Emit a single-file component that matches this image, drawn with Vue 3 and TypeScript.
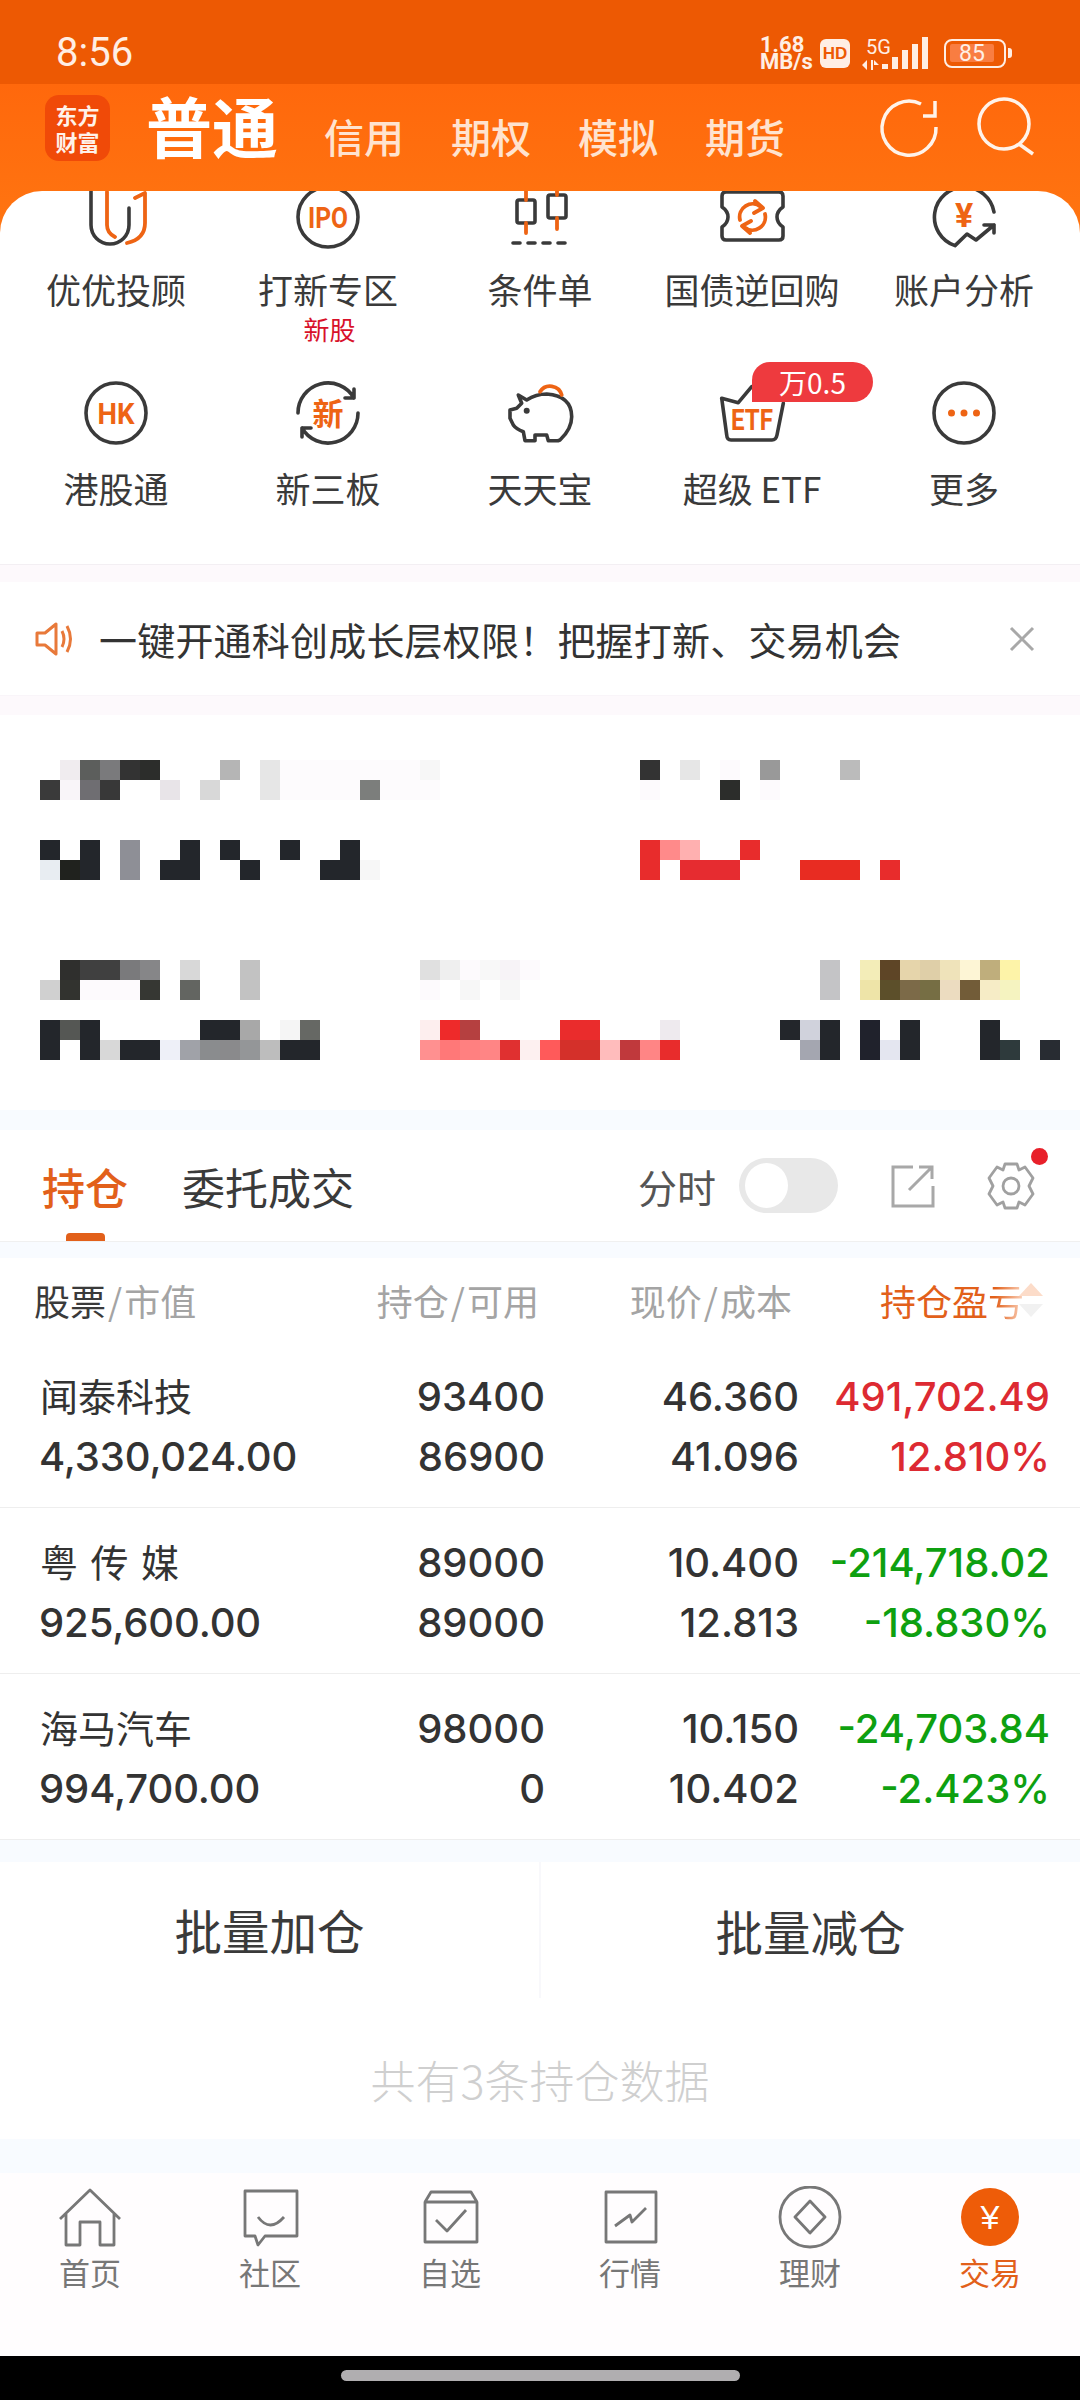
<script setup lang="ts">
interface GridIcon {
  label: string
  sub?: string
  badge?: string
  dark: string
  accent: string
  fill?: string
  glyph?: { text: string; x: number; y: number; size: number; length?: number }
}

const grid: GridIcon[] = [
  { label: '优优投顾', dark: 'M15 4V48a19 19 0 0 0 38 0V31', accent: 'M31 15V48Q31 56 39 60M59 21L69 16V46Q69 62 51 66' },
  { label: '打新专区', sub: '新股', dark: 'M70 40A30 30 0 1 1 10 40A30 30 0 1 1 70 40', accent: '', glyph: { text: 'IPO', x: 40, y: 51, size: 30, length: 40 } },
  { label: '条件单', dark: 'M19 23H33a2 2 0 0 1 2 2V44a2 2 0 0 1-2 2H19a2 2 0 0 1-2-2V25a2 2 0 0 1 2-2ZM50 18H64a2 2 0 0 1 2 2V39a2 2 0 0 1-2 2H50a2 2 0 0 1-2-2V20a2 2 0 0 1 2-2ZM13 66H20M28 66H35M43 66H50M58 66H65', accent: 'M26 6V23M26 46V56M57 6V18M57 41V52' },
  { label: '国债逆回购', dark: 'M14 15H67Q71 15 71 19V30Q65 34 65 40Q65 46 71 50V59Q71 63 67 63H14Q10 63 10 59V50Q16 46 16 40Q16 34 10 30V19Q10 15 14 15Z', accent: 'M28 43A13 13 0 0 1 49 30M43 24L51 31L42 36M53 37A13 13 0 0 1 32 50M38 56L30 49L39 44' },
  { label: '账户分析', dark: 'M70 35A30 30 0 1 0 31 68.6L43 57L52 63L70 48M60 48H70V56', accent: '', glyph: { text: '¥', x: 40, y: 50, size: 34 } },
  { label: '港股通', dark: 'M70 40A30 30 0 1 1 10 40A30 30 0 1 1 70 40', accent: '', glyph: { text: 'HK', x: 40, y: 51, size: 30, length: 37 } },
  { label: '新三板', dark: 'M10 40A30 30 0 0 1 66 25M66 16V25H57M70 40A30 30 0 0 1 14 55M14 64V55H23', accent: '', glyph: { text: '新', x: 40, y: 52, size: 31 } },
  { label: '天天宝', dark: 'M18.3 22L26.7 27Q36 21 46.7 21Q71.7 23 71.7 43.7Q71.7 56 60 67L58 67.7H48.3L46.7 62H35V67.7H25L23.3 58.7Q16 56 13.3 52L10 45.3V37L16.7 35.3L21.7 30.3Z', accent: 'M40 18.7A12 12 0 0 1 61.7 22', fill: 'M29.7 37.7a3 3 0 1 1-6 0a3 3 0 1 1 6 0Z' },
  { label: '超级 ETF', badge: '万0.5', dark: 'M9.7 25.3L26.3 29.7L39.7 13.7M9.7 25.3L14.7 62Q15 67 19 67H60Q64 67 65 62L71.3 30.3', accent: '', glyph: { text: 'ETF', x: 40, y: 57, size: 30, length: 42 } },
  { label: '更多', dark: 'M70 40A30 30 0 1 1 10 40A30 30 0 1 1 70 40', accent: '', fill: 'M31 40a3.5 3.5 0 1 1-7 0a3.5 3.5 0 1 1 7 0ZM43.500 40a3.5 3.5 0 1 1-7 0a3.5 3.5 0 1 1 7 0ZM56 40a3.5 3.5 0 1 1-7 0a3.5 3.5 0 1 1 7 0Z' },
]

// censored area of the original, 20px cells, '-' is an empty cell
const w = '-'
const mosaicTop = [
  {
    rows: [
      `${w} #f0ecef #5c5e5c #7a7a7c #333333 #2c2d2b ${w} ${w} ${w} #b5b5b5 ${w} #e6e6e6 #fdfbfd #fdfbfd #fdfbfd #fdfbfd #fdfbfd #fdfbfd #fdfbfd #f7f7f7`,
      `#3a3a3a #f9f5f9 #6f6e72 #383838 ${w} ${w} #e8e4e8 ${w} #d8d8d8 ${w} ${w} #e6e6e6 #fdfbfd #fdfbfd #fdfbfd #fdfbfd #7c7e7c #fdfbfd #fdfbfd #fdfbfd`,
    ],
    rows2: [
      `#23262b ${w} #23262b ${w} #8e8f96 ${w} ${w} #23262b ${w} #23262b ${w} ${w} #23262b ${w} ${w} #23262b ${w}`,
      `#e8edf2 #20221e #23262b ${w} #8e8f96 ${w} #23262b #23262b ${w} ${w} #23262b ${w} ${w} ${w} #23262b #23262b #f7f7f7`,
    ],
  },
  {
    rows: [
      `#333333 ${w} #e6e6e6 ${w} #fdfafd ${w} #999999 ${w} ${w} ${w} #bbbbbb`,
      `#fdfafd ${w} ${w} ${w} #2c2d2b ${w} #fdfafd`,
    ],
    rows2: [
      `#e82c2c #ff8a8a #ffb0b0 ${w} ${w} #e82c2c`,
      `#e82c2c ${w} #e62c30 #e62c30 #e62c30 ${w} ${w} ${w} #e82c22 #e82c22 #e82c22 ${w} #e82c2c`,
    ],
  },
]
const mosaicBottom = [
  {
    rows: [
      `${w} #2f2f2d #404040 #404040 #7a7a7c #868688 ${w} #d8d8d8 ${w} ${w} #c2c2c2`,
      `#d0d0d0 #32332f #fdfafd #fdfafd #fdfafd #363733 ${w} #636561 ${w} ${w} #c2c2c2`,
    ],
    rows2: [
      `#23262b #555754 #23262b ${w} ${w} ${w} ${w} ${w} #23262b #23262b #a8a8a8 ${w} #f5f5f5 #666864`,
      `#23262b ${w} #23262b #d8d8d8 #23262b #23262b #eef0f8 #a0a2a8 #8a8c8e #8a8a8c #949698 #bdbdbd #23262b #23262b`,
    ],
  },
  {
    rows: [
      `#e0e0e0 #efefef #fdfafd #f8f8f8 #f7f3f7 #fdfafd`,
      `#fdfafd ${w} #f7f7f7 ${w} #f7f7f7`,
    ],
    rows2: [
      `#fdeeee #ee2a2a #b54040 ${w} ${w} ${w} ${w} #ea2c2c #ea2c2c ${w} ${w} ${w} #eeeaee`,
      `#ff9090 #ff7878 #ff8080 #ff8585 #e03030 #fdf0f0 #ff5a5a #d4302a #d4302a #ffbcbc #c0393c #ff8585 #e82c2c`,
    ],
  },
  {
    rows: [
      `${w} ${w} #c4c4c6 ${w} #f3edb8 #5e4526 #e6d5ab #dfcfa8 #efe3ba #fdf5d5 #bfae7c #fdf3a8`,
      `${w} ${w} #c4c4c6 ${w} #eee4a8 #5c4f2a #7c6a48 #766e44 #ecdcc0 #725c38 #f6ecc6 #f5f3c0`,
    ],
    rows2: [
      `#23262b #d0d2dc #23262b ${w} #20222c ${w} #23262b ${w} ${w} ${w} #23262b`,
      `${w} #a4a6b0 #23262b ${w} #20222c #e4e6f0 #23262b ${w} ${w} ${w} #23262b #2e3a3c ${w} #282c32`,
    ],
  },
]

const cells = (row: string) => row.split(' ').map((c) => (c === '-' ? 'transparent' : c))

const holdings = [
  { name: '闻泰科技', value: '4,330,024.00', qty: '93400', free: '86900', price: '46.360', cost: '41.096', pnl: '491,702.49', pct: '12.810%', up: true },
  { name: '粤 传 媒', value: '925,600.00', qty: '89000', free: '89000', price: '10.400', cost: '12.813', pnl: '-214,718.02', pct: '-18.830%', up: false },
  { name: '海马汽车', value: '994,700.00', qty: '98000', free: '0', price: '10.150', cost: '10.402', pnl: '-24,703.84', pct: '-2.423%', up: false },
]

const tabs = [
  { label: '首页', d: 'M2 33L32 4L62 33M8 27V59H22V36H42V59H56V27' },
  { label: '社区', d: 'M7 5H59V50H27L20 59L17 50H7ZM20 31Q32 47 46 31' },
  { label: '自选', d: 'M7 16H59V56H7ZM7 16L13 6H53L59 16M18 34L29 45L48 24' },
  { label: '行情', d: 'M8 6H58V56H8ZM17 40L32 29L34 36L48 22' },
  { label: '理财', d: 'M62 31A30 30 0 1 1 2 31A30 30 0 1 1 62 31ZM32 15L47 31L32 47L17 31Z' },
]
</script>

<template>
  <div class="app">
    <div class="status">
      <span class="time">8:56</span>
      <div class="status-right">
        <div class="speed"><span>1.68</span><span>MB/s</span></div>
        <span class="hd">HD</span>
        <div class="net">
          <span class="five-g">5G</span>
          <svg class="arrows" width="20" height="10" viewBox="0 0 20 10"><path d="M5 0V10L0 5ZM9 0H11V10H9ZM12 0L17 5H12Z" fill="#ffeee4" /></svg>
        </div>
        <svg class="bars" width="46" height="32" viewBox="0 0 46 32"><path d="M0 27H6V32H0ZM10 20H16V32H10ZM20 13H26V32H20ZM30 7H36V32H30ZM40 0H46V32H40Z" fill="#ffeee4" /></svg>
        <div class="battery">
          <div class="battery-body"><span class="battery-level">85</span></div>
          <span class="battery-nub"></span>
        </div>
      </div>
    </div>

    <div class="nav">
      <div class="logo"><span>东方</span><span>财富</span></div>
      <span class="nav-main">普通</span>
      <div class="nav-links">
        <span>信用</span>
        <span>期权</span>
        <span>模拟</span>
        <span>期货</span>
      </div>
      <svg class="refresh" width="64" height="64" viewBox="0 0 64 64" fill="none" stroke="#fff3ea" stroke-width="3.5"><path d="M44 9A27 27 0 1 0 59 32M46 21H58V6" /></svg>
      <svg class="search" width="60" height="60" viewBox="0 0 60 60" fill="none" stroke="#fff3ea" stroke-width="3.5"><circle cx="28" cy="27" r="25" /><path d="M43 47L57 57" /></svg>
    </div>

    <div class="sheet">
      <div class="menu">
        <div v-for="item in grid" :key="item.label" class="menu-item">
          <svg width="80" height="80" viewBox="0 0 80 80" fill="none">
            <path :d="item.dark" stroke="#3a3a3a" stroke-width="3.6" stroke-linecap="round" stroke-linejoin="round" />
            <path v-if="item.accent" :d="item.accent" stroke="#ee6414" stroke-width="3.8" stroke-linecap="round" stroke-linejoin="round" />
            <path v-if="item.fill" :d="item.fill" :fill="item.label === '更多' ? '#ee6414' : '#3a3a3a'" />
            <text
              v-if="item.glyph"
              :x="item.glyph.x"
              :y="item.glyph.y"
              :font-size="item.glyph.size"
              :textLength="item.glyph.length"
              lengthAdjust="spacingAndGlyphs"
              text-anchor="middle"
              class="glyph"
            >{{ item.glyph.text }}</text>
          </svg>
          <span class="menu-label">{{ item.label }}</span>
          <span v-if="item.sub" class="menu-sub">{{ item.sub }}</span>
          <span v-if="item.badge" class="menu-badge">{{ item.badge }}</span>
        </div>
      </div>

      <div class="band"></div>

      <div class="notice">
        <svg width="40" height="36" viewBox="0 0 40 36" fill="none" stroke="#e8793a" stroke-width="3" stroke-linejoin="round">
          <path d="M2 12H10L21 3V33L10 24H2ZM27 10Q31 18 27 26M32 5Q39 18 32 31" />
        </svg>
        <span class="notice-text">一键开通科创成长层权限！把握打新、交易机会</span>
        <svg class="notice-close" width="26" height="26" viewBox="0 0 26 26" stroke="#a8a8a8" stroke-width="3"><path d="M2 2L24 24M24 2L2 24" /></svg>
      </div>

      <div class="band second"></div>

      <div class="assets">
        <div class="asset-row top">
          <div v-for="(block, i) in mosaicTop" :key="i" class="asset">
            <div class="mosaic">
              <div v-for="(row, r) in block.rows" :key="r" class="mosaic-row">
                <i v-for="(c, k) in cells(row)" :key="k" :style="{ background: c }"></i>
              </div>
            </div>
            <div class="mosaic">
              <div v-for="(row, r) in block.rows2" :key="r" class="mosaic-row">
                <i v-for="(c, k) in cells(row)" :key="k" :style="{ background: c }"></i>
              </div>
            </div>
          </div>
        </div>
        <div class="asset-row bottom">
          <div v-for="(block, i) in mosaicBottom" :key="i" class="asset">
            <div class="mosaic">
              <div v-for="(row, r) in block.rows" :key="r" class="mosaic-row">
                <i v-for="(c, k) in cells(row)" :key="k" :style="{ background: c }"></i>
              </div>
            </div>
            <div class="mosaic">
              <div v-for="(row, r) in block.rows2" :key="r" class="mosaic-row">
                <i v-for="(c, k) in cells(row)" :key="k" :style="{ background: c }"></i>
              </div>
            </div>
          </div>
        </div>
      </div>

      <div class="band tint"></div>

      <div class="tabs">
        <span class="tab active">持仓</span>
        <span class="tab">委托成交</span>
        <div class="tools">
          <span class="tool-label">分时</span>
          <span class="toggle"><span class="knob"></span></span>
          <svg class="share" width="44" height="44" viewBox="0 0 44 44" fill="none" stroke="#a8a8a8" stroke-width="3"><path d="M22 3H2V42H42V22M18 26L41 3M28 3H41V15" /></svg>
          <div class="gear">
            <svg width="50" height="50" viewBox="0 0 50 50" fill="none" stroke="#a0a0a0" stroke-width="2.8" stroke-linejoin="round">
              <path d="M19 3H31L33 9L39 6L47 17L43 25L47 33L39 44L33 41L31 47H19L17 41L11 44L3 33L7 25L3 17L11 6L17 9Z" />
              <circle cx="25" cy="25" r="8" />
            </svg>
            <span class="gear-dot"></span>
          </div>
        </div>
      </div>

      <div class="band tint thin"></div>

      <div class="table-head">
        <span><b>股票</b><i>/</i>市值</span>
        <span class="col">持仓<i>/</i>可用</span>
        <span class="col">现价<i>/</i>成本</span>
        <span class="col-sort">持仓盈<span class="fade">亏</span>
          <svg class="sort" width="28" height="34" viewBox="0 0 28 34"><path d="M14 0L26 13H2Z" fill="#fcdcc9" /><path d="M14 34L2 21H26Z" fill="#f1f1f1" /></svg>
        </span>
      </div>

      <div v-for="row in holdings" :key="row.name" class="row">
        <span class="name">{{ row.name }}</span>
        <span class="num">{{ row.qty }}</span>
        <span class="num">{{ row.price }}</span>
        <span class="num" :class="row.up ? 'up' : 'down'">{{ row.pnl }}</span>
        <span class="value">{{ row.value }}</span>
        <span class="num">{{ row.free }}</span>
        <span class="num">{{ row.cost }}</span>
        <span class="num" :class="row.up ? 'up' : 'down'">{{ row.pct }}</span>
      </div>

      <div class="band tint gap"></div>

      <div class="batch">
        <span>批量加仓</span>
        <span>批量减仓</span>
      </div>
      <div class="total">共有3条持仓数据</div>
      <div class="band tint foot"></div>
    </div>

    <div class="tabbar">
      <div v-for="tab in tabs" :key="tab.label" class="tabbar-item">
        <svg width="64" height="64" viewBox="0 0 64 64" fill="none" stroke="#777777" stroke-width="2.8" stroke-linejoin="round"><path :d="tab.d" /></svg>
        <span>{{ tab.label }}</span>
      </div>
      <div class="tabbar-item active">
        <svg width="64" height="64" viewBox="0 0 64 64">
          <circle cx="32" cy="31" r="29" fill="#ee5c08" />
          <text x="32" y="43" text-anchor="middle" font-size="34" fill="#fff" class="yen">¥</text>
        </svg>
        <span>交易</span>
      </div>
    </div>

    <div class="gesture"><span class="pill"></span></div>
  </div>
</template>

<style>
html,
body {
  margin: 0;
  background: #fff;
}
</style>

<style scoped>
.app {
  width: 1080px;
  height: 2400px;
  overflow: hidden;
  font-family: "Noto Sans CJK SC", "Noto Sans", sans-serif;
  color: #333;
}

.status {
  height: 84px;
  background: #ed5903;
  display: flex;
  align-items: center;
  padding: 22px 68px 0 56px;
  box-sizing: border-box;
  justify-content: space-between;
  color: #ffeee4;
}

.time {
  font: 400 40px/40px Roboto, sans-serif;
}

.status-right {
  display: flex;
  align-items: center;
}

.speed {
  display: flex;
  flex-direction: column;
  font: 700 22px/17px Roboto, sans-serif;
  width: 53px;
}

.hd {
  width: 30px;
  height: 29px;
  margin-left: 7px;
  border-radius: 6px;
  background: #ffeee4;
  color: #ed5903;
  font: 900 17px/29px "Liberation Sans", sans-serif;
  text-align: center;
}

.net {
  display: flex;
  flex-direction: column;
  margin-left: 12px;
  width: 26px;
}

.five-g {
  padding-left: 4px;
  font: 400 20px/20px Roboto, sans-serif;
}

.arrows {
  margin-top: 3px;
}

.bars {
  margin-left: -6px;
}

.battery {
  display: flex;
  align-items: center;
  margin-left: 16px;
}

.battery-body {
  width: 62px;
  height: 29px;
  box-sizing: border-box;
  border: 2.5px solid #ffeee4;
  border-radius: 8px;
  padding: 3px 10px 3px 4px;
}

.battery-level {
  display: block;
  height: 18px;
  background: #f97d41;
  border-radius: 2px;
  font: 400 23px/19px Roboto, sans-serif;
  text-align: center;
}

.battery-nub {
  width: 4px;
  height: 10px;
  margin-left: 2px;
  border-radius: 0 3px 3px 0;
  background: #ffeee4;
}

.nav {
  height: 150px;
  background: linear-gradient(#ff680c, #ff7511);
  display: flex;
  align-items: flex-start;
  padding-left: 45px;
  box-sizing: border-box;
  color: #fff;
}

.logo {
  width: 65px;
  height: 66px;
  margin-top: 11px;
  background: #f04a08;
  border-radius: 14px;
  display: flex;
  flex-direction: column;
  align-items: center;
  justify-content: center;
  font-size: 22px;
  line-height: 27px;
  font-weight: 700;
  color: #fff2ea;
}

.nav-main {
  margin: -3px 0 0 36px;
  font-size: 66px;
  line-height: 86px;
  font-weight: 700;
}

.nav-links {
  display: flex;
  gap: 47px;
  margin: 26px 0 0 46px;
  font-size: 40px;
  line-height: 52px;
  font-weight: 500;
  color: #ffe3cf;
}

.refresh {
  margin: 11px 0 0 92px;
}

.search {
  margin: 13px 0 0 35px;
}

.sheet {
  position: relative;
  height: 1982px;
  margin-top: -43px;
  background: #fff;
  border-radius: 42px 42px 0 0;
  overflow: hidden;
}

.menu {
  display: grid;
  grid-template-columns: repeat(5, 212px);
  grid-template-rows: 196px 191px;
  padding-left: 10px;
  margin-top: -14px;
}

.menu-item {
  position: relative;
  display: flex;
  flex-direction: column;
  align-items: center;
}

.menu-item svg {
  display: block;
}

.glyph {
  fill: #ee6414;
  font-family: Roboto, "Noto Sans CJK SC", sans-serif;
  font-weight: 700;
}

.menu-label {
  margin-top: 10px;
  font-size: 35px;
  line-height: 50px;
  color: #3a3a3a;
}

.menu-item:nth-child(-n + 5) .menu-label {
  margin-top: 7px;
}

.menu-sub {
  margin-left: 3px;
  padding-top: 1px;
  font-size: 26px;
  line-height: 28px;
  color: #d8112a;
}

.menu-badge {
  position: absolute;
  top: -11px;
  left: 106px;
  width: 121px;
  height: 40px;
  background: #ee3a3e;
  border-radius: 18px 20px 20px 0;
  font-size: 28px;
  line-height: 40px;
  text-align: center;
  color: #fff;
}

.band {
  height: 18px;
  background: #fdf9fc;
  border-top: 1px solid #f3eff3;
  box-sizing: border-box;
}

.band.second {
  height: 20px;
  border-top-color: #f9f5f9;
}

.band.tint {
  height: 20px;
  background: #f8fbff;
  border-top: 0;
}

.band.thin {
  height: 17px;
  border-top: 1px solid #f0f0f0;
}

.band.gap {
  height: 22px;
  border-top: 0;
}

.band.foot {
  height: 34px;
}

.notice {
  height: 113px;
  display: flex;
  align-items: center;
  padding: 0 45px 0 35px;
}

.notice-text {
  margin-left: 24px;
  font-size: 38px;
  letter-spacing: 0.2px;
  color: #333;
  white-space: nowrap;
}

.notice-close {
  margin-left: auto;
}

.assets {
  height: 395px;
  padding: 45px 0 0 0;
  box-sizing: border-box;
}

.asset-row {
  display: grid;
  padding-left: 40px;
}

.asset-row.top {
  grid-template-columns: 600px 1fr;
}

.asset-row.bottom {
  grid-template-columns: 380px 360px 1fr;
  margin-top: 80px;
}

.asset {
  display: flex;
  flex-direction: column;
}

.top .asset {
  gap: 40px;
}

.bottom .asset {
  gap: 20px;
}

.mosaic-row {
  display: flex;
  height: 20px;
}

.mosaic-row i {
  display: block;
  width: 20px;
  height: 20px;
}

.tabs {
  position: relative;
  height: 111px;
  padding: 0 44px 0 42px;
  display: flex;
  align-items: center;
  box-sizing: border-box;
}

.tab {
  font-size: 43px;
  margin-right: 54px;
  color: #3a3a3a;
}

.tab.active {
  color: #e2601a;
  font-weight: 500;
}

.tab.active::after {
  content: "";
  position: absolute;
  left: 66px;
  bottom: 0;
  width: 39px;
  height: 8px;
  border-radius: 4px 4px 0 0;
  background: #e2601a;
}

.tools {
  margin-left: auto;
  display: flex;
  align-items: center;
}

.tool-label {
  font-size: 39px;
  color: #555;
}

.toggle {
  width: 99px;
  height: 55px;
  margin-left: 23px;
  border-radius: 28px;
  background: #e8e8e8;
  display: flex;
  align-items: center;
  padding-left: 6px;
  box-sizing: border-box;
}

.knob {
  width: 43px;
  height: 45px;
  border-radius: 50%;
  background: #fff;
}

.share {
  margin-left: 53px;
}

.gear {
  position: relative;
  margin-left: 51px;
  height: 50px;
}

.gear-dot {
  position: absolute;
  top: -13px;
  right: -12px;
  width: 17px;
  height: 17px;
  border-radius: 50%;
  background: #e8202a;
}

.table-head {
  height: 84px;
  display: grid;
  grid-template-columns: 267px 238px 253px 1fr;
  align-items: center;
  padding-left: 34px;
  box-sizing: border-box;
  font-size: 36px;
  color: #a4a4a4;
}

.table-head b {
  font-weight: 400;
  color: #3a3a3a;
}

.table-head i {
  font-style: normal;
  margin: 0 2px;
}

.col {
  text-align: right;
}

.col-sort {
  display: flex;
  align-items: center;
  margin-left: 88px;
  color: #e2601a;
  white-space: nowrap;
}

.fade {
  background: linear-gradient(90deg, #e2601a 20%, #fbd5c0);
  -webkit-background-clip: text;
  background-clip: text;
  color: transparent;
}

.sort {
  margin-left: -7px;
  flex: none;
}

.row {
  display: grid;
  grid-template-columns: 300px 245px 254px 251px;
  grid-auto-rows: 60px;
  align-items: center;
  padding: 25px 0 19px;
  border-bottom: 1px solid #eeeeee;
  height: 166px;
  box-sizing: border-box;
}

.name {
  padding: 0 0 6px 40px;
  font-size: 38px;
  word-spacing: 4px;
  white-space: pre;
  color: #333;
}

.value {
  padding-left: 39px;
  font: 500 40px/60px Inter, sans-serif;
  letter-spacing: -0.1px;
  color: #333;
  white-space: nowrap;
}

.num {
  text-align: right;
  font: 500 40px/60px Inter, sans-serif;
  color: #333;
  white-space: nowrap;
}

.up {
  color: #dd2a32;
}

.down {
  color: #0ea010;
}

.batch {
  height: 136px;
  display: grid;
  grid-template-columns: 541px 1fr;
  align-items: center;
  text-align: center;
  font-size: 47.5px;
  color: #3a3a3a;
}

.batch span:first-child {
  line-height: 136px;
  border-right: 2px solid #f8f8fb;
}

.total {
  height: 141px;
  line-height: 164px;
  text-align: center;
  font-size: 45px;
  font-weight: 300;
  color: #cfcfcf;
}

.tabbar {
  height: 183px;
  display: grid;
  grid-template-columns: repeat(6, 180px);
  background: #fffdfe;
}

.tabbar-item {
  display: flex;
  flex-direction: column;
  align-items: center;
  padding-top: 13px;
  font-size: 31px;
  line-height: 40px;
  color: #777;
}

.tabbar-item span {
  margin-top: 2px;
}

.tabbar-item.active {
  color: #e2601a;
}

.yen {
  font-family: "Liberation Sans", sans-serif;
}

.gesture {
  height: 44px;
  background: #000;
  display: flex;
  justify-content: center;
  padding-top: 14px;
  box-sizing: border-box;
}

.pill {
  width: 399px;
  height: 11px;
  border-radius: 6px;
  background: #b0aeb0;
}
</style>
